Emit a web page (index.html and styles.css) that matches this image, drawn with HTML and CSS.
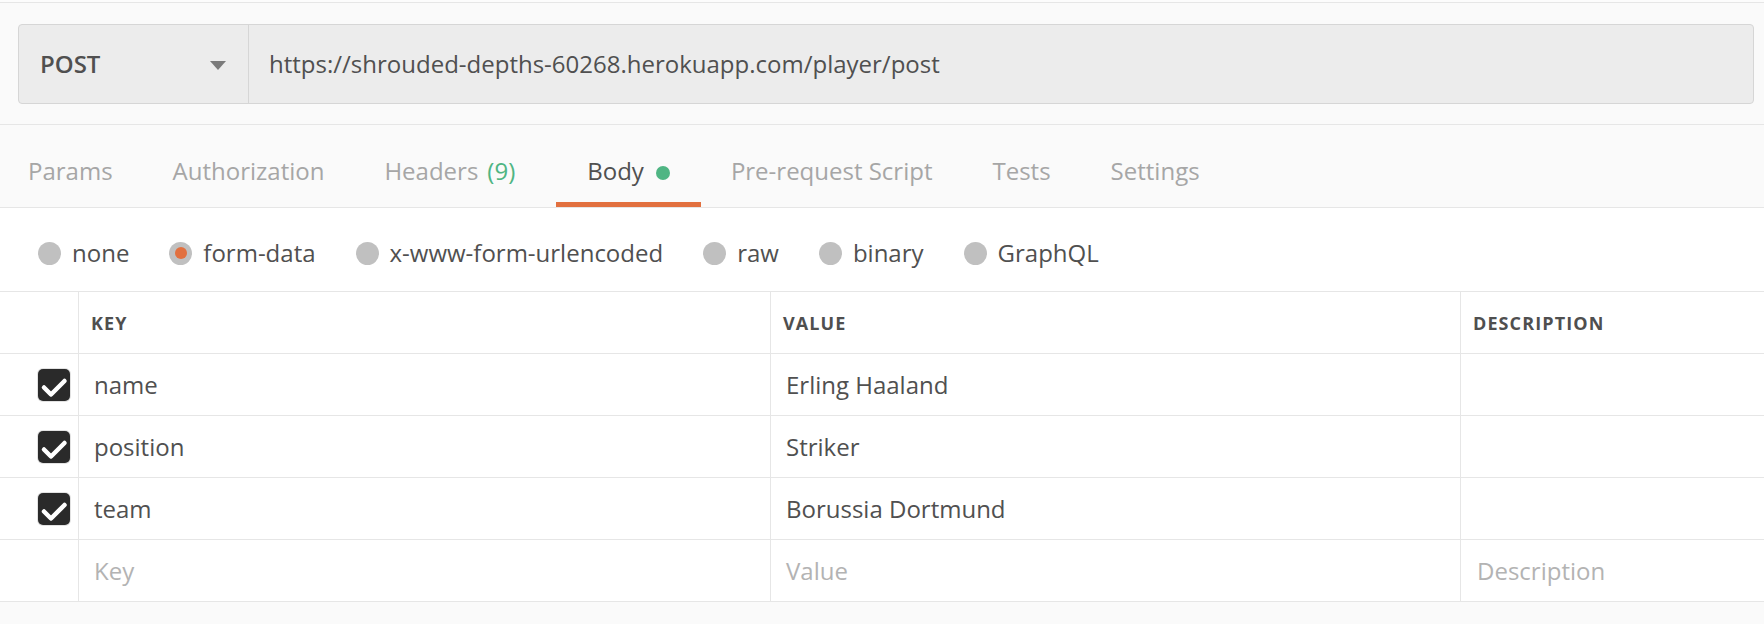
FILE: index.html
```html
<!DOCTYPE html>
<html lang="en">
<head>
<meta charset="utf-8">
<title>POST request</title>
<link rel="stylesheet" href="styles.css">
</head>
<body>
<div class="app">
  <div class="request-bar">
    <div class="request-box">
      <div class="method">
        <span class="method-name">POST</span>
        <span class="caret"></span>
      </div>
      <div class="url">https://shrouded-depths-60268.herokuapp.com/player/post</div>
    </div>
  </div>

  <nav class="tabs">
    <div class="tab tab-first">Params</div>
    <div class="tab">Authorization</div>
    <div class="tab tab-headers">Headers<span class="count">(9)</span></div>
    <div class="tab tab-active"><span>Body</span><span class="dot"></span></div>
    <div class="tab">Pre-request Script</div>
    <div class="tab">Tests</div>
    <div class="tab">Settings</div>
  </nav>

  <div class="body-types">
    <label class="radio"><span class="circle"></span>none</label>
    <label class="radio"><span class="circle circle-on"><span class="inner"></span></span>form-data</label>
    <label class="radio"><span class="circle"></span>x-www-form-urlencoded</label>
    <label class="radio"><span class="circle"></span>raw</label>
    <label class="radio"><span class="circle"></span>binary</label>
    <label class="radio"><span class="circle"></span>GraphQL</label>
  </div>

  <div class="kv">
    <div class="kv-row kv-head">
      <div class="cell cell-check"></div>
      <div class="cell">KEY</div>
      <div class="cell">VALUE</div>
      <div class="cell">DESCRIPTION</div>
    </div>
    <div class="kv-row">
      <div class="cell cell-check"><span class="check"><svg width="32" height="32" viewBox="0 0 32 32"><polyline points="6,18.5 13,25.5 26.5,12" fill="none" stroke="#fff" stroke-width="4.5" stroke-linecap="round" stroke-linejoin="round"/></svg></span></div>
      <div class="cell">name</div>
      <div class="cell">Erling Haaland</div>
      <div class="cell"></div>
    </div>
    <div class="kv-row">
      <div class="cell cell-check"><span class="check"><svg width="32" height="32" viewBox="0 0 32 32"><polyline points="6,18.5 13,25.5 26.5,12" fill="none" stroke="#fff" stroke-width="4.5" stroke-linecap="round" stroke-linejoin="round"/></svg></span></div>
      <div class="cell">position</div>
      <div class="cell">Striker</div>
      <div class="cell"></div>
    </div>
    <div class="kv-row">
      <div class="cell cell-check"><span class="check"><svg width="32" height="32" viewBox="0 0 32 32"><polyline points="6,18.5 13,25.5 26.5,12" fill="none" stroke="#fff" stroke-width="4.5" stroke-linecap="round" stroke-linejoin="round"/></svg></span></div>
      <div class="cell">team</div>
      <div class="cell">Borussia Dortmund</div>
      <div class="cell"></div>
    </div>
    <div class="kv-row">
      <div class="cell cell-check"></div>
      <div class="cell placeholder">Key</div>
      <div class="cell placeholder">Value</div>
      <div class="cell placeholder">Description</div>
    </div>
  </div>
</div>
</body>
</html>
```

FILE: styles.css
```css
html, body {
  margin: 0;
  padding: 0;
  background: #fafafa;
}

body {
  font-family: "Open Sans", "Liberation Sans", sans-serif;
  color: #505050;
  font-size: 24px;
  line-height: 32px;
}

.app {
  width: 1764px;
  padding-top: 2px;
  background: #fcfcfc;
}

/* request bar */
.request-bar {
  border-top: 1px solid #e6e6e6;
  background: #fafafa;
  padding: 21px 10px 20px 18px;
}

.request-box {
  display: flex;
  height: 80px;
  box-sizing: border-box;
  border: 1px solid #d6d6d6;
  border-radius: 4px;
  background: #ececec;
}

.method {
  width: 230px;
  box-sizing: border-box;
  border-right: 1px solid #d6d6d6;
  display: flex;
  align-items: center;
  justify-content: space-between;
  padding: 0 22px 0 21px;
}

.method-name {
  font-weight: 600;
  color: #505050;
}

.caret {
  width: 0;
  height: 0;
  border-left: 8px solid transparent;
  border-right: 8px solid transparent;
  border-top: 9px solid #7b7b7b;
  margin-top: 2px;
}

.url {
  flex: 1;
  display: flex;
  align-items: center;
  padding-left: 20px;
  color: #505050;
}

/* tabs */
.tabs {
  display: flex;
  border-top: 1px solid #e6e6e6;
  border-bottom: 1px solid #e6e6e6;
  background: #fafafa;
}

.tab {
  display: flex;
  align-items: center;
  padding: 30px 30px 15px;
  border-bottom: 5px solid transparent;
  color: #a6a6a6;
  white-space: pre;
}

.tab-first {
  padding-left: 28px;
}

.tab-headers {
  padding-right: 41px;
}

.count {
  color: #4fb583;
  margin-left: 9px;
}

.tab-active {
  color: #505050;
  border-bottom-color: #e2703f;
  padding-left: 31px;
  padding-right: 31px;
}

.dot {
  width: 14px;
  height: 14px;
  border-radius: 50%;
  background: #4fb583;
  margin-left: 12px;
  margin-top: 4px;
}

/* body types */
.body-types {
  display: flex;
  align-items: center;
  background: #fff;
  padding: 29px 0 22px 38px;
  gap: 40px;
}

.radio {
  display: flex;
  align-items: center;
  gap: 11px;
  color: #505050;
}

.circle {
  width: 23px;
  height: 23px;
  border-radius: 50%;
  background: #c0c0c0;
  display: flex;
  align-items: center;
  justify-content: center;
}

.circle-on .inner {
  width: 12px;
  height: 12px;
  border-radius: 50%;
  background: #e2703f;
}

/* key-value table */
.kv {
  border-top: 1px solid #e6e6e6;
  background: #fff;
}

.kv-row {
  display: grid;
  grid-template-columns: 78px 692px 690px 1fr;
  height: 62px;
  box-sizing: border-box;
  border-bottom: 1px solid #e6e6e6;
}

.cell {
  display: flex;
  align-items: center;
  padding-left: 15px;
  color: #505050;
}

.cell + .cell {
  border-left: 1px solid #e6e6e6;
}

.kv-head .cell {
  padding-left: 12px;
  font-size: 18px;
  font-weight: 700;
  letter-spacing: 1.1px;
  color: #4f4f4f;
}

.cell-check {
  padding-left: 0;
  justify-content: flex-end;
  padding-right: 8px;
}

.check {
  width: 32px;
  height: 32px;
  border-radius: 5px;
  background: #2a2a2a;
  box-shadow: 0 0 0 1px #e2e2e2;
  display: block;
}

.check svg {
  display: block;
}

.placeholder {
  color: #b3b3b3;
}

.cell.placeholder:last-child {
  padding-left: 16px;
}
```
